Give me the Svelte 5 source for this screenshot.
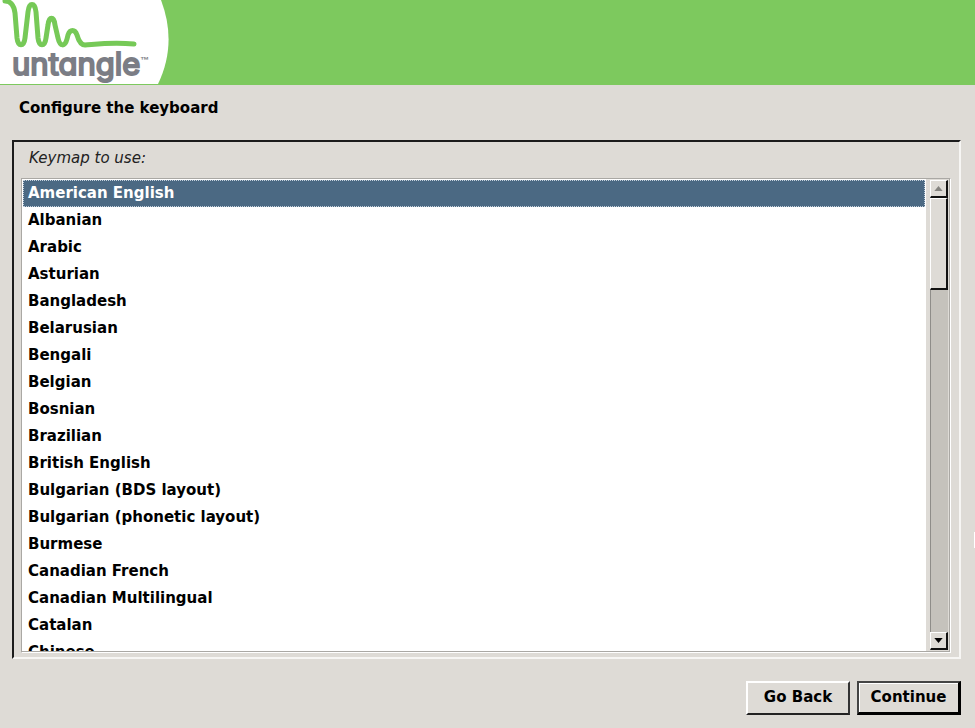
<script>
  const keymaps = [
    'American English', 'Albanian', 'Arabic', 'Asturian', 'Bangladesh', 'Belarusian',
    'Bengali', 'Belgian', 'Bosnian', 'Brazilian', 'British English',
    'Bulgarian (BDS layout)', 'Bulgarian (phonetic layout)', 'Burmese',
    'Canadian French', 'Canadian Multilingual', 'Catalan', 'Chinese'
  ];
  let keymap = $state('American English');
  let list;

  function scroll(rows) {
    list.scrollTop += rows * 27;
  }
</script>

<div class="installer">
  <header>
    <div class="logo">
      <svg class="swoosh" viewBox="0 0 170 86" aria-hidden="true">
        <path class="panel" d="M0 0H161C172 29 171 57 158 84H0Z" />
        <path
          class="wave"
          d="M5 1C10 1 14 5 15 13L17 38C18 47 24 47 25 38L28 12C29 2 35 2 36 12L38 38C39 47 45 47 46 38L48 25C49 16 54 16 55 25L58 38C60 47 65 47 67 39L68 35C70 29 75 29 77 35C79 42 81 45 85 45C98 44 112 42 134 44"
        />
      </svg>
      <span class="wordmark">untangle</span>
      <span class="tm">™</span>
    </div>
  </header>

  <main>
    <h1>Configure the keyboard</h1>

    <section class="frame">
      <label for="keymap">Keymap to use:</label>
      <div class="listbox">
        <select id="keymap" size="17" bind:value={keymap} bind:this={list}>
          {#each keymaps as name}
            <option value={name}>{name}</option>
          {/each}
        </select>
        <div class="scrollbar">
          <button class="arrow" aria-label="Scroll up" onclick={() => scroll(-1)}>
            <svg viewBox="0 0 10 6"><path d="M5 0L10 6H0Z" fill="#858480" /></svg>
          </button>
          <div class="thumb"></div>
          <div class="track"></div>
          <button class="arrow" aria-label="Scroll down" onclick={() => scroll(1)}>
            <svg viewBox="0 0 10 6"><path d="M0 0H10L5 6Z" fill="#000" /></svg>
          </button>
        </div>
      </div>
    </section>

    <footer>
      <button class="action">Go Back</button>
      <button class="action default">Continue</button>
    </footer>
  </main>
  <i class="edge-mark"></i>
</div>

<style>
  :global(body) {
    margin: 0;
  }

  .installer {
    position: relative;
    display: flex;
    flex-direction: column;
    height: 100vh;
    overflow: hidden;
    background: #dedbd6;
    color: #000;
    font: bold 15px/18px 'DejaVu Sans', sans-serif;
  }

  .installer * {
    box-sizing: border-box;
  }

  header {
    flex: none;
    height: 85px;
    background: #7dc95e;
  }

  .logo {
    position: relative;
    width: 170px;
    height: 85px;
  }

  .swoosh {
    display: block;
    width: 170px;
    height: 86px;
  }

  .panel {
    fill: #fff;
  }

  .wave {
    fill: none;
    stroke: #76c957;
    stroke-width: 5;
    stroke-linecap: round;
    stroke-linejoin: round;
  }

  .wordmark {
    position: absolute;
    left: 12px;
    top: 46px;
    color: #7b7d85;
    font: 400 31px/36px Inter, sans-serif;
    font-feature-settings: 'cv11';
    -webkit-text-stroke: 2px #7b7d85;
    stroke-linejoin: round;
  }

  .tm {
    position: absolute;
    left: 140px;
    top: 54px;
    color: #7b7d85;
    font: bold 9px/12px 'Liberation Sans', sans-serif;
  }

  main {
    display: flex;
    flex: 1;
    flex-direction: column;
    min-height: 0;
    padding: 14px 14px 13px 12px;
  }

  h1 {
    margin: 0 0 23px 7px;
    font: inherit;
  }

  .frame {
    display: flex;
    flex: 1;
    flex-direction: column;
    min-height: 0;
    padding: 7px 8px 4px 7px;
    border: 2px solid;
    border-color: #1c1c1c #f7f6f4 #f7f6f4 #1c1c1c;
  }

  label {
    margin: 0 0 11px 8px;
    color: #222;
    font-weight: normal;
    font-style: italic;
  }

  .listbox {
    display: flex;
    flex: 1;
    min-height: 0;
    border: 1px solid;
    border-color: #aaa8a4 #fff #fff #aaa8a4;
  }

  select {
    flex: 1;
    min-width: 0;
    height: 100%;
    margin: 0;
    padding: 1px 1px 0;
    overflow-y: auto;
    border: 0;
    border-bottom: 1px solid #aaa8a4;
    border-radius: 0;
    outline: 0;
    background: #fff;
    color: #000;
    font: inherit;
    scrollbar-width: none;
  }

  option {
    height: 27px;
    padding: 4px 5px 5px;
    color: #000;
    font: bold 15px/18px 'DejaVu Sans', sans-serif;
  }

  option:checked {
    border: 1px dotted #c3d0dc;
    padding: 3px 4px 4px;
    background: #4b6983 linear-gradient(#4b6983, #4b6983);
    color: #fff;
  }

  .scrollbar {
    display: flex;
    flex: none;
    flex-direction: column;
    width: 24px;
    padding: 1px 1px 1px 4px;
    border-right: 1px solid #aaa8a4;
    border-bottom: 1px solid #aaa8a4;
  }

  .arrow,
  .thumb {
    border: 1px solid;
    border-color: #fff #111 #111 #fff;
    border-right-width: 2px;
    border-bottom-width: 2px;
    background: #dedbd6;
  }

  .arrow {
    display: flex;
    align-items: center;
    justify-content: center;
    flex: none;
    width: 100%;
    height: 18px;
    padding: 0;
  }

  .arrow svg {
    width: 9px;
    height: 5px;
  }

  .thumb {
    flex: 0 0 92px;
  }

  .track {
    flex: 1;
    border-left: 1px solid #8f8d89;
    background: #c5c2bc;
  }

  footer {
    display: flex;
    justify-content: flex-end;
    gap: 7px;
    margin-top: 22px;
  }

  .action {
    width: 104px;
    height: 34px;
    padding: 0 0 2px;
    border: 2px solid;
    border-color: #fff #333 #222 #fff;
    background: #dedbd6;
    color: #000;
    font: inherit;
  }

  .default {
    border-color: #444 #000 #000 #444;
    border-width: 2px 3px 3px 2px;
    box-shadow: inset 1px 1px #fff;
  }

  .edge-mark {
    position: absolute;
    right: 0;
    top: 532px;
    width: 1px;
    height: 16px;
    background: #fff;
  }
</style>
